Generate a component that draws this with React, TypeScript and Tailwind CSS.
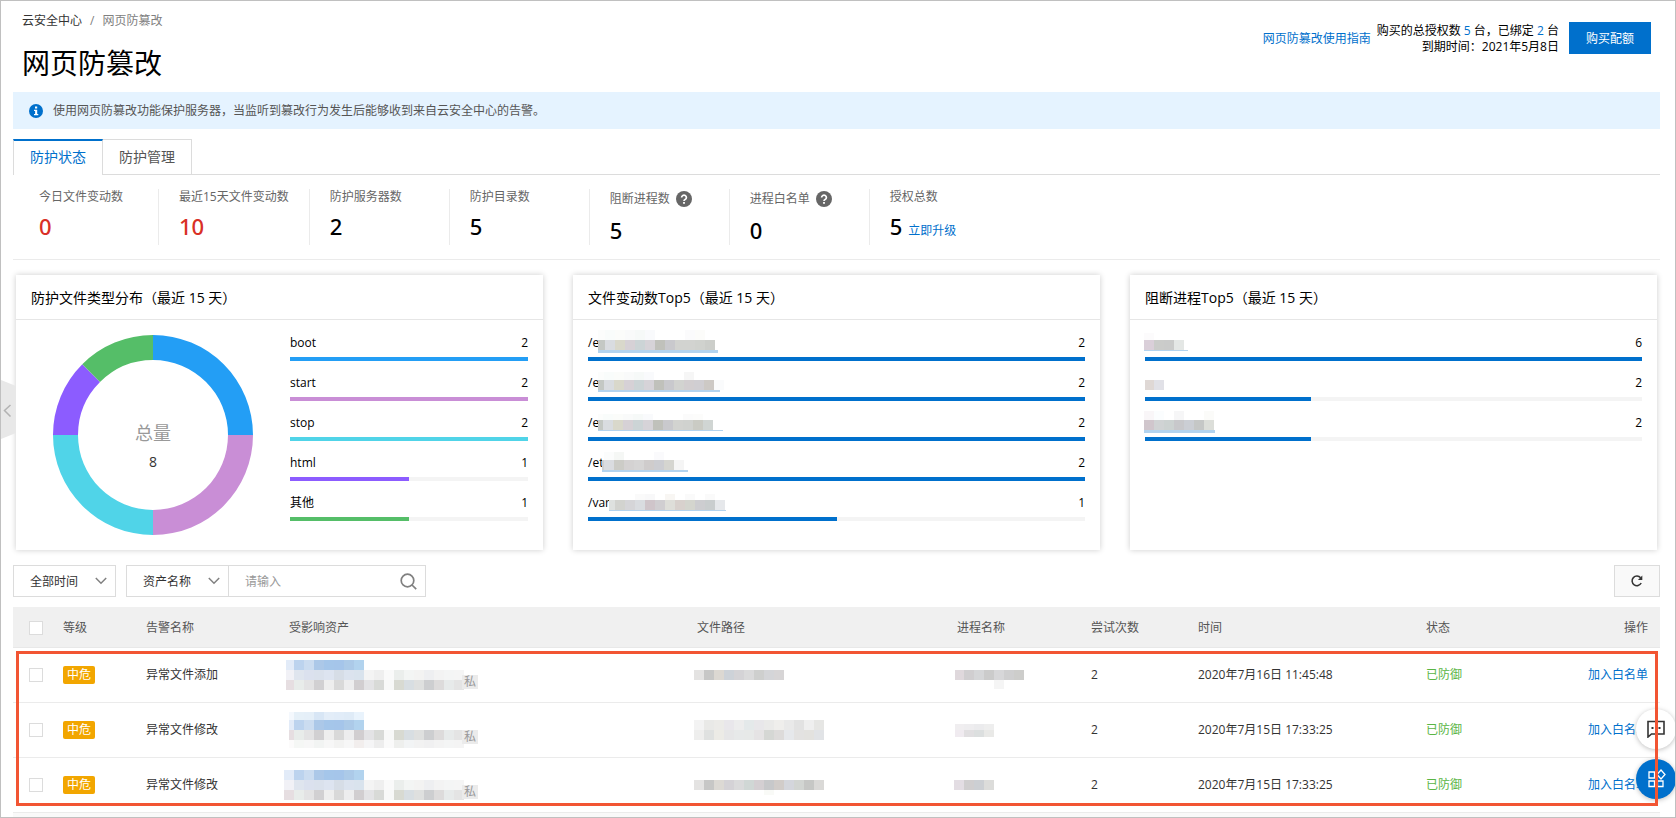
import React, { useState } from "react";

interface Strip {
    x: number;
    y: number;
    h: number;
    // width of the first block, the others are 10 wide
    first?: number;
    colors: string[];
}

interface RankItem {
    label: string;
    count: number;
    percent: number;
    color: string;
    mask?: Strip[];
    maskWidth?: number;
}

interface AlarmRow {
    id: number;
    name: string;
    time: string;
    asset: Strip[];
    path: Strip[];
    process: Strip[];
}

const BLUE = "bg-[#0070cc]";
const LINE = "#b2d3ef";

const fileTypes: RankItem[] = [
    { label: "boot", count: 2, percent: 100, color: "bg-[#239ef5]" },
    { label: "start", count: 2, percent: 100, color: "bg-[#c98ed6]" },
    { label: "stop", count: 2, percent: 100, color: "bg-[#50d4e8]" },
    { label: "html", count: 1, percent: 50, color: "bg-[#8c5cff]" },
    { label: "其他", count: 1, percent: 50, color: "bg-[#55be68]" },
];

const pathColors = ["#c4c8c4", "#d9dce0", "#d9d8cb", "#d6d1d6", "#ccd4d6", "#d6d3d8", "#c0c1bb", "#c9c9cd", "#d2d3d0"];
const pathHaze = ["#fcfdfc", "#f9fcfb", "#fbfcfa", "#f9fafa", "#f6f9f8", "#f9fafc"];

const fileChanges: RankItem[] = [
    {
        label: "/e", count: 2, percent: 100, color: BLUE, maskWidth: 120,
        mask: [
            { x: 0, y: -5, h: 10, first: 7, colors: pathHaze },
            { x: 87, y: -5, h: 10, colors: ["#fbfbfc", "#fcfcfa"] },
            { x: 0, y: 5, h: 10, first: 7, colors: [...pathColors, "#d2d3d0", "#d0d2ce", "#ccceca"] },
            { x: 0, y: 15, h: 3, first: 120, colors: [LINE] },
        ],
    },
    {
        label: "/e", count: 2, percent: 100, color: BLUE, maskWidth: 122,
        mask: [
            { x: 0, y: -3, h: 8, first: 6, colors: pathHaze },
            { x: 86, y: -3, h: 8, colors: ["#f6f6f6"] },
            { x: 0, y: 5, h: 10, first: 6, colors: [...pathColors, "#d2ced0", "#d0ced2", "#cdc9c5", "#fafbfc"] },
            { x: 0, y: 15, h: 2, first: 122, colors: [LINE] },
        ],
    },
    {
        label: "/e", count: 2, percent: 100, color: BLUE, maskWidth: 125,
        mask: [
            { x: 0, y: -1, h: 6, first: 5, colors: pathHaze },
            { x: 85, y: -1, h: 6, colors: ["#fbfbfb", "#fcfcfb"] },
            { x: 0, y: 5, h: 10, first: 5, colors: [...pathColors, "#d0d2cf", "#cacbc4", "#d0d5d3"] },
            { x: 0, y: 15, h: 1, first: 125, colors: [LINE] },
        ],
    },
    {
        label: "/et", count: 2, percent: 100, color: BLUE, maskWidth: 86,
        mask: [
            { x: 2, y: -3, h: 8, colors: ["#fbfcfc", "#f5f7f5"] },
            { x: 52, y: -3, h: 8, colors: ["#fafafc"] },
            { x: 0, y: 5, h: 10, first: 2, colors: ["#cfd0d2", "#dadce0", "#ccccc7", "#d4d2d2", "#d6d5d5", "#cfcccc", "#cccdd2", "#d5d5d0", "#f5f5f5"] },
            { x: 0, y: 15, h: 2, first: 86, colors: [LINE] },
        ],
    },
    {
        label: "/var", count: 1, percent: 50, color: BLUE, maskWidth: 117,
        mask: [
            { x: 26, y: -1, h: 6, colors: ["#fafafa", "#f8f8f9"] },
            { x: 56, y: -1, h: 6, colors: ["#f8f6f3"] },
            { x: 76, y: -1, h: 6, colors: ["#fafafa"] },
            { x: 96, y: -1, h: 6, colors: ["#fafafa"] },
            { x: 0, y: 5, h: 10, first: 6, colors: ["#dee1df", "#d2d3cf", "#d5d5d8", "#d9dce0", "#cfc5ca", "#d0ced1", "#deded9", "#d8d1cd", "#d4d5ce", "#cdcdd0", "#c9cdce", "#e6e8eb"] },
            { x: 0, y: 15, h: 1, first: 117, colors: [LINE] },
        ],
    },
];

const blockedProcesses: RankItem[] = [
    {
        label: "", count: 6, percent: 100, color: BLUE, maskWidth: 44,
        mask: [
            { x: -1, y: -2, h: 7, colors: ["#fcfbfc"] },
            { x: -1, y: 5, h: 10, colors: ["#dacfd9", "#cbccca", "#cacbca", "#e4e7e5"] },
            { x: -1, y: 15, h: 1, first: 44, colors: [LINE] },
        ],
    },
    {
        label: "", count: 2, percent: 33.4, color: BLUE, maskWidth: 20,
        mask: [{ x: 0, y: 5, h: 10, first: 9, colors: ["#dfd8d5", "#e1e1e7"] }],
    },
    {
        label: "", count: 2, percent: 33.4, color: BLUE, maskWidth: 71,
        mask: [
            { x: -1, y: -4, h: 9, colors: ["#f9f6f8", "#fbfdfe", "#fff", "#f6f6f7", "#fff", "#fff", "#fbfbf9"] },
            { x: -1, y: 5, h: 10, colors: ["#d0c6cc", "#d0d3d4", "#ccd2d1", "#c8c8cb", "#cbced4", "#c5c7c6", "#dcded9"] },
            { x: -1, y: 15, h: 3, first: 71, colors: [LINE] },
        ],
    },
];

const assetBlue = ["#e2ebf8", "#bcd3ee", "#cbdcf0", "#acc8e8", "#a5c6ea", "#a5c5ea", "#accae8", "#b2d3ee"];
const assetMiddle = ["#f1f1f6", "#dfe5ee", "#dbe1ee", "#dae1ec", "#dde4f0", "#d6dde6", "#dbe3ee", "#d9e3ed", "#f4f4f4", "#efefef", "#fafafa", "#ebeeec", "#f3f5f4", "#f3f3f2", "#eeeff1", "#f3f3f3", "#f4f5f5", "#f5f5f5"];
const assetGray = ["#e6dee1", "#e8ecea", "#e3e3e4", "#d1d0d2", "#eeeeee", "#d9d9d9", "#ededee", "#d1ced0", "#e3e3e5", "#d8dad7", "#f8f9f8", "#d8dad2", "#d8dee2", "#dfe0df", "#cdced0", "#dddbdb", "#e7eaea", "#e4e4e4"];
const processGray = ["#dfd8dc", "#d0ced0", "#d5d6d8", "#cbcbcb", "#d7d7d9", "#cfcfd0", "#cdcdcb"];

const alarms: AlarmRow[] = [
    {
        id: 1,
        name: "异常文件添加",
        time: "2020年7月16日 11:45:48",
        asset: [
            { x: -3, y: 12, h: 10, first: 8, colors: assetBlue },
            { x: -3, y: 22, h: 10, first: 8, colors: assetMiddle },
            { x: -3, y: 32, h: 10, first: 8, colors: assetGray },
        ],
        path: [{ x: -3, y: 22, h: 10, colors: ["#e4e3e2", "#c7c7c6", "#dcd8d2", "#cdd2d8", "#d4d3d6", "#dadadb", "#cecfce", "#d4d5d8", "#d7d5d6"] }],
        process: [
            { x: -2, y: 22, h: 10, first: 9, colors: processGray },
            { x: 37, y: 32, h: 9, colors: ["#f5f5f5"] },
        ],
    },
    {
        id: 2,
        name: "异常文件修改",
        time: "2020年7月15日 17:33:25",
        asset: [
            { x: 0, y: 9, h: 8, first: 5, colors: ["#f4f8fd", "#e6f0f8", "#e5eff8", "#d8e6f5", "#e3edf8", "#e1ecf8", "#dfebf7", "#e9f3fc"] },
            { x: 0, y: 17, h: 10, first: 5, colors: assetBlue },
            { x: 0, y: 27, h: 10, first: 5, colors: assetGray },
            { x: 0, y: 37, h: 8, first: 5, colors: ["#fcfbfb", "#f5f7f5", "#f7f7f7", "#f2f4f3", "#f7f7f7", "#f3f3f2", "#f7f7f7", "#f2eeed", "#f5f5f6", "#ededed", "#fafafa", "#eeefed", "#f2f4f5", "#f2f2f2", "#f0f0f1", "#f3f3f3", "#f4f5f5", "#f4f4f4"] },
        ],
        path: [
            { x: -3, y: 17, h: 10, colors: ["#f3f3f3", "#e9e9e7", "#ecebe8", "#e9e7eb", "#ededed", "#e4e9ea", "#e8e7ea", "#eaeae9", "#efeeec", "#e9e9e9", "#e2e2e2", "#efefef", "#e6e6e4"] },
            { x: -3, y: 27, h: 10, colors: ["#eeeeed", "#dfe1e0", "#ecebe6", "#e6e6e7", "#e7e9e9", "#e7e9e8", "#e5e3e4", "#d5d7d4", "#dddbda", "#e6e8eb", "#e3e2e1", "#e3e2df", "#e1e3e6"] },
        ],
        process: [
            { x: -2, y: 21, h: 6, first: 9, colors: ["#f0eef0", "#eeedef", "#ebebed", "#eeeeee"] },
            { x: -2, y: 27, h: 7, first: 9, colors: ["#f0ebf0", "#e1dfe1", "#dcdfdf", "#e9e9e7"] },
        ],
    },
    {
        id: 3,
        name: "异常文件修改",
        time: "2020年7月15日 17:33:25",
        asset: [
            { x: -5, y: 12, h: 10, colors: assetBlue },
            { x: -5, y: 22, h: 10, colors: assetMiddle },
            { x: -5, y: 32, h: 10, colors: assetGray },
        ],
        path: [
            { x: -3, y: 22, h: 10, colors: ["#e4e3e2", "#c7c7c6", "#dcd9d4", "#d4d2d6", "#dadadb", "#d0d7d5", "#d4cfd2", "#c7c8ca", "#d1ccc9", "#d4d6dc", "#d2d5d2", "#c6c7c5", "#dad9d7"] },
            { x: 67, y: 32, h: 5, colors: ["#f9faf7"] },
        ],
        process: [{ x: -3, y: 22, h: 10, colors: ["#e3dde3", "#d0cecf", "#cccfd3", "#dcdcda"] }],
    },
];

const Mosaic: React.FC<{ strips: Strip[]; width: number; height: number }> = ({ strips, width, height }) => (
    <svg width={width} height={height} className="block shrink-0 overflow-visible" shapeRendering="crispEdges" aria-hidden="true">
        {strips.map((s, i) => {
            const first = s.first ?? 10;
            return s.colors.map((c, j) => (
                <rect
                    key={`${i}-${j}`}
                    x={j === 0 ? s.x : s.x + first + (j - 1) * 10}
                    y={s.y}
                    width={j === 0 ? first : 10}
                    height={s.h}
                    fill={c}
                />
            ));
        })}
    </svg>
);

const HelpIcon = () => (
    <svg width="16" height="16" viewBox="0 0 16 16" className="shrink-0">
        <circle cx="8" cy="8" r="8" fill="#666" />
        <path d="M5.6 6.4a2.4 2.3 0 1 1 3.6 2c-.8.5-1.2.8-1.2 1.5" fill="none" stroke="#fff" strokeWidth="1.7" />
        <rect x="7.1" y="11" width="1.8" height="1.8" fill="#fff" />
    </svg>
);

const Chevron: React.FC<{ className?: string }> = ({ className = "" }) => (
    <svg width="12" height="8" viewBox="0 0 12 8" fill="none" stroke="#808080" strokeWidth="1.5" className={className}>
        <path d="M.8 1 6 6.2 11.2 1" />
    </svg>
);

const Stat: React.FC<{ label: string; value: number; danger?: boolean; help?: boolean; last?: boolean; children?: React.ReactNode }> = ({
    label, value, danger, help, last, children,
}) => (
    <div className={`h-14 min-w-[140px] px-5 ${last ? "" : "border-r border-[#ebebeb]"}`}>
        <div className={`flex items-center gap-1.5 text-[#666] ${help ? "h-5" : "h-4"}`}>
            {label}
            {help && <HelpIcon />}
        </div>
        <div className="mt-[3px] flex items-baseline gap-1.5 leading-9">
            <span className={`font-['Noto_Sans',sans-serif] text-[22px] font-medium ${danger ? "text-[#d93026]" : "text-black"}`}>{value}</span>
            {children}
        </div>
    </div>
);

const RankList: React.FC<{ items: RankItem[] }> = ({ items }) => (
    <ul className="flex min-w-0 flex-1 flex-col gap-3.5 pt-[15px]">
        {items.map((item, i) => (
            <li key={i}>
                <div className="flex h-4 justify-between leading-4 text-black">
                    <span className="flex">
                        {item.label && <span className={item.mask ? "-mr-px" : ""}>{item.label}</span>}
                        {item.mask && <Mosaic strips={item.mask} width={item.maskWidth ?? 0} height={16} />}
                    </span>
                    <span>{item.count}</span>
                </div>
                <div className="mt-1.5 h-1 bg-[#f4f4f4]">
                    <div className={`h-1 ${item.color}`} style={{ width: `${item.percent}%` }} />
                </div>
            </li>
        ))}
    </ul>
);

const Card: React.FC<{ title: string; children: React.ReactNode }> = ({ title, children }) => (
    <section className="min-w-0 flex-1 bg-white shadow-[0_0_6px_rgba(0,0,0,0.2)]">
        <h2 className="border-b border-[#e6e6e6] px-[15px] pt-0.5 text-sm leading-[42px] text-black">{title}</h2>
        <div className="flex min-h-[230px] px-[15px]">{children}</div>
    </section>
);

const Donut = () => (
    <svg width="200" height="200" viewBox="0 0 200 200" className="mt-[15px] mr-[37px] ml-[22px] shrink-0">
        <path d="M100 0A100 100 0 0 1 200 100H175A75 75 0 0 0 100 25Z" fill="#239ef5" />
        <path d="M200 100A100 100 0 0 1 100 200V175A75 75 0 0 0 175 100Z" fill="#c98ed6" />
        <path d="M100 200A100 100 0 0 1 0 100H25A75 75 0 0 0 100 175Z" fill="#50d4e8" />
        <path d="M0 100A100 100 0 0 1 29.3 29.3L47 47A75 75 0 0 0 25 100Z" fill="#8c5cff" />
        <path d="M29.3 29.3A100 100 0 0 1 100 0V25A75 75 0 0 0 47 47Z" fill="#55be68" />
        <text x="100" y="105" textAnchor="middle" fontSize="18" fill="#999">总量</text>
        <text x="100" y="132" textAnchor="middle" fontSize="14" fill="#333">8</text>
    </svg>
);

const checkboxClass = "block size-3.5 appearance-none border border-[#dcdcdc] bg-white checked:bg-[#0070cc]";
const selectClass = "h-full w-full appearance-none bg-transparent pt-0.5 pl-4 text-[#333] outline-none";

const App: React.FC = () => {
    const [tab, setTab] = useState<string>("防护状态");
    const [keyword, setKeyword] = useState<string>("");

    return (
        <div className="relative min-h-screen overflow-hidden border border-[#c0c0c0] bg-white pr-[15px] pl-3 font-['Open_Sans','Noto_Sans_CJK_SC',sans-serif] text-xs text-[#333]">
            <header className="flex justify-between pr-[9px] pb-[9px] pl-[9px]">
                <div>
                    <nav className="mt-3 flex gap-2 leading-4">
                        <a href="#" className="text-[#333]">云安全中心</a>
                        <span className="text-[#808080]">/</span>
                        <span className="text-[#808080]">网页防篡改</span>
                    </nav>
                    <h1 className="mt-3.5 text-[28px] leading-10 text-black">网页防篡改</h1>
                </div>
                <div className="mt-[21px] flex h-8 items-center">
                    <a href="#" className="pt-0.5 text-[#0070cc]">网页防篡改使用指南</a>
                    <div className="ml-1.5 pt-0.5 text-right leading-4 text-black">
                        <p>购买的总授权数 <span className="text-[#0070cc]">5</span> 台，已绑定 <span className="text-[#0070cc]">2</span> 台</p>
                        <p>到期时间：2021年5月8日</p>
                    </div>
                    <button className="ml-2.5 h-8 bg-[#0070cc] px-[17px] pt-0.5 text-white">购买配额</button>
                </div>
            </header>

            <div className="flex h-[37px] items-center gap-2.5 bg-[#e5f3ff] px-4 text-[#555]">
                <svg width="14" height="14" viewBox="0 0 14 14">
                    <circle cx="7" cy="7" r="7" fill="#0070cc" />
                    <path d="M6 2.5h2.2v2H6zM5 5.7h3.2v4.2h1.1v1.3H5V9.9h1.1V7H5z" fill="#fff" />
                </svg>
                使用网页防篡改功能保护服务器，当监听到篡改行为发生后能够收到来自云安全中心的告警。
            </div>

            <div className="mt-2.5 flex border-b border-[#dcdcdc]" role="tablist">
                {["防护状态", "防护管理"].map((t) => (
                    <button
                        key={t}
                        role="tab"
                        aria-selected={tab === t}
                        onClick={() => setTab(t)}
                        className={
                            tab === t
                                ? "-mb-px h-9 border-x border-t-2 border-x-[#dcdcdc] border-t-[#0070cc] bg-white px-4 pb-0.5 text-sm text-[#0070cc]"
                                : "h-[35px] border-t border-r border-[#dcdcdc] px-4 text-sm text-[#555]"
                        }
                    >
                        {t}
                    </button>
                ))}
            </div>

            <div className="flex border-b border-[#ebebeb] px-1.5 py-3.5">
                <Stat label="今日文件变动数" value={0} danger />
                <Stat label="最近15天文件变动数" value={10} danger />
                <Stat label="防护服务器数" value={2} />
                <Stat label="防护目录数" value={5} />
                <Stat label="阻断进程数" value={5} help />
                <Stat label="进程白名单" value={0} help />
                <Stat label="授权总数" value={5} last>
                    <a href="#" className="text-[#0070cc]">立即升级</a>
                </Stat>
            </div>

            <div className="mx-[3px] mt-[15px] flex gap-[30px]">
                <Card title="防护文件类型分布（最近 15 天）">
                    <Donut />
                    <RankList items={fileTypes} />
                </Card>
                <Card title="文件变动数Top5（最近 15 天）">
                    <RankList items={fileChanges} />
                </Card>
                <Card title="阻断进程Top5（最近 15 天）">
                    <RankList items={blockedProcesses} />
                </Card>
            </div>

            <div className="mt-[15px] flex h-8">
                <div className="relative w-[103px] border border-[#dcdcdc]">
                    <select aria-label="时间范围" className={selectClass}>
                        <option>全部时间</option>
                    </select>
                    <Chevron className="pointer-events-none absolute top-[11px] right-2" />
                </div>
                <div className="relative ml-2.5 w-[103px] border border-[#dcdcdc]">
                    <select aria-label="搜索类型" className={selectClass}>
                        <option>资产名称</option>
                    </select>
                    <Chevron className="pointer-events-none absolute top-[11px] right-2" />
                </div>
                <div className="flex w-[197px] items-center border-y border-r border-[#dcdcdc]">
                    <input
                        aria-label="搜索"
                        placeholder="请输入"
                        value={keyword}
                        onChange={(e) => setKeyword(e.target.value)}
                        className="min-w-0 flex-1 pt-0.5 pl-4 outline-none placeholder:text-[#999]"
                    />
                    <button aria-label="查询" className="mr-2">
                        <svg width="17" height="17" viewBox="0 0 17 17" fill="none" stroke="#808080" strokeWidth="1.7">
                            <circle cx="7.5" cy="7.5" r="6.3" />
                            <path d="m12 12 4.2 4.2" />
                        </svg>
                    </button>
                </div>
                <button aria-label="刷新" className="ml-auto flex w-[46px] items-center justify-center border border-[#dcdcdc] bg-[#f9f9f9]">
                    <svg width="12" height="12" viewBox="0 0 12 12">
                        <path d="M10.2 8A4.8 4.8 0 1 1 9.6 2.8" fill="none" stroke="#333" strokeWidth="1.5" />
                        <path d="M11.3.6V5H6.9z" fill="#333" />
                    </svg>
                </button>
            </div>

            <div className="relative mt-2.5">
                <table className="w-full table-fixed text-left">
                    <colgroup>
                        <col className="w-[34px]" />
                        <col className="w-[83px]" />
                        <col className="w-[143px]" />
                        <col className="w-[408px]" />
                        <col className="w-[260px]" />
                        <col className="w-[134px]" />
                        <col className="w-[107px]" />
                        <col className="w-[228px]" />
                        <col className="w-[130px]" />
                        <col className="w-[120px]" />
                    </colgroup>
                    <thead>
                        <tr className="h-10 border-b border-[#e8e8e8] bg-[#f0f0f0] text-[#555]">
                            <th className="pt-0.5 pl-4">
                                <input type="checkbox" aria-label="全选" className={checkboxClass} />
                            </th>
                            {["等级", "告警名称", "受影响资产", "文件路径", "进程名称", "尝试次数", "时间", "状态"].map((h) => (
                                <th key={h} className="pt-0.5 pl-4 font-normal">{h}</th>
                            ))}
                            <th className="pt-0.5 pr-3 text-right font-normal">操作</th>
                        </tr>
                    </thead>
                    <tbody>
                        {alarms.map((row) => (
                            <tr key={row.id} className="h-[55px] border-b border-[#ebebeb]">
                                <td className="pl-4">
                                    <input type="checkbox" aria-label={row.name} className={checkboxClass} />
                                </td>
                                <td className="pl-4">
                                    <span className="block w-8 rounded-xs bg-[#f2a600] text-center leading-[18px] text-white">中危</span>
                                </td>
                                <td className="pl-4">{row.name}</td>
                                <td className="pl-4">
                                    <div className="flex h-[54px]">
                                        <Mosaic strips={row.asset} width={173} height={54} />
                                        <span className="mt-[27px] h-3.5 w-4 bg-[#ebebeb] text-center leading-[14px] text-[#999]">私</span>
                                    </div>
                                </td>
                                <td className="pl-4"><Mosaic strips={row.path} width={130} height={54} /></td>
                                <td className="pl-4"><Mosaic strips={row.process} width={70} height={54} /></td>
                                <td className="pl-4">2</td>
                                <td className="pl-4">{row.time}</td>
                                <td className="pl-4 text-[#5ab545]">已防御</td>
                                <td className="pr-3 text-right">
                                    <a href="#" className="text-[#0070cc]">加入白名单</a>
                                </td>
                            </tr>
                        ))}
                    </tbody>
                </table>
                <div className="h-1 bg-[#f9f9f9]" />

                <button aria-label="咨询" className="absolute right-[-16px] bottom-[68px] flex size-10 items-center justify-center rounded-full bg-white shadow-[0_1px_5px_rgba(0,0,0,0.25)]">
                    <svg width="18" height="18" viewBox="0 0 18 18" fill="none" stroke="#333" strokeWidth="1.6">
                        <path d="M1 1.5h16V14H4.5L1 17z" />
                        <path d="M4.5 8h2M8 8h2M11.5 8h2" strokeWidth="2" />
                    </svg>
                </button>
                <button aria-label="应用" className="absolute right-[-16px] bottom-[18px] flex size-10 items-center justify-center rounded-full bg-[#0070cc] shadow-[0_1px_5px_rgba(0,0,0,0.25)]">
                    <svg width="19" height="19" viewBox="0 0 19 19" fill="none" stroke="#fff" strokeWidth="1.3">
                        <path d="M2 3h5.5v6H2zM2 12h5.5v5.5H2zM10.5 12H16v5.5h-5.5zM14 1l4 4.5-4 4.5-4-4.5z" />
                    </svg>
                </button>
                <div className="pointer-events-none absolute top-11 right-0.5 bottom-[11px] left-[3px] border-3 border-[#f25533]" />
            </div>

            <button aria-label="收起菜单" className="absolute top-[379px] left-0">
                <svg width="15" height="59" viewBox="0 0 15 59" className="block">
                    <path d="M0 0l15 6v47L0 59z" fill="#e8e8e8" />
                    <path d="M9.5 25 3.5 30.5 9.5 36.5" fill="none" stroke="#b3b3b3" strokeWidth="1.5" />
                </svg>
            </button>
        </div>
    );
};

export default App;
